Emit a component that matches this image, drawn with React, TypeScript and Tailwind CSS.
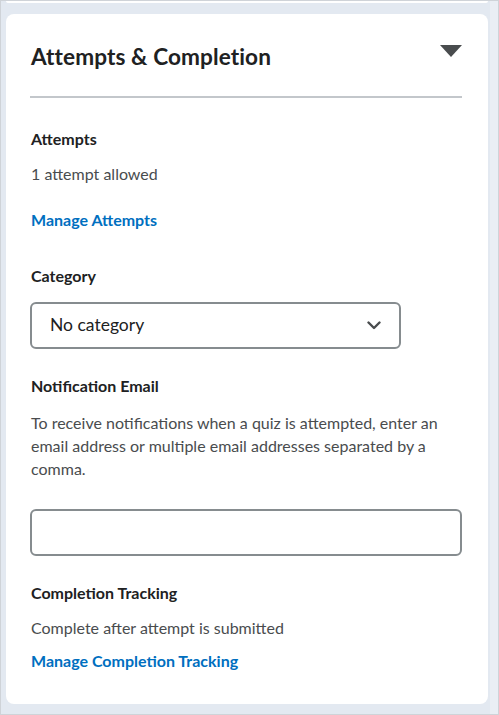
import React from "react";

export default function App() {
  return (
    <div
      className="w-[499px] h-[715px] border border-[#cfd3d8] bg-[#e3e9f1] flex overflow-hidden"
      style={{ fontFamily: "Lato, 'Noto Sans', sans-serif" }}
    >
      <div className="flex-1 flex flex-col pl-[5px]">
        <div className="h-[2px] w-[482px] bg-white rounded-b-[8px]" />
        <div className="mt-[11px] w-[482px] h-[690px] bg-white rounded-[8px] pl-[24px] pr-[26px] pt-[28px]">
          <div className="flex items-start justify-between h-[40px]">
            <h2 className="text-[22.6px] font-bold leading-[30px] text-[#202122] tracking-[0.1px] pl-[1px]">
              Attempts &amp; Completion
            </h2>
            <svg width="22" height="13" viewBox="0 0 22 13" className="mt-[3px]">
              <path d="M0 0 H22 L11 12 Z" fill="#494c4e" />
            </svg>
          </div>
          <div className="h-[2px] bg-[#c3c7cb] mt-[14px]" />

          <div className="pl-[1px]">
            <div className="mt-[31px] text-[16px] font-bold text-[#202122] leading-[20px]">Attempts</div>
            <div className="mt-[15px] text-[16px] text-[#494c4e] leading-[20px]">1 attempt allowed</div>
            <div className="mt-[26px] text-[16px] font-bold text-[#006fbf] leading-[20px]">Manage Attempts</div>

            <div className="mt-[36px] text-[16px] font-bold text-[#202122] leading-[20px]">Category</div>
          </div>
          <div className="mt-[16px] w-[371px] h-[47px] border-2 border-[#868c8f] rounded-[6px] flex items-center justify-between pl-[18px] pr-[18px]">
            <span className="text-[17.5px] text-[#202122]">No category</span>
            <svg width="14" height="9" viewBox="0 0 14 9">
              <path d="M1.5 1.5 L7 7 L12.5 1.5" stroke="#494c4e" strokeWidth="2.4" fill="none" strokeLinecap="round" strokeLinejoin="round" />
            </svg>
          </div>

          <div className="pl-[1px]">
            <div className="mt-[27px] text-[16px] font-bold text-[#202122] leading-[20px]">Notification Email</div>
            <p className="mt-[15px] text-[16px] text-[#494c4e] leading-[23px] pr-[8px]">
              To receive notifications when a quiz is attempted, enter an email address or multiple email addresses separated by a comma.
            </p>
          </div>
          <div className="mt-[29px] w-[432px] h-[47px] border-2 border-[#868c8f] rounded-[6px]" />

          <div className="pl-[1px]">
            <div className="mt-[27px] text-[16px] font-bold text-[#202122] leading-[20px]">Completion Tracking</div>
            <div className="mt-[15px] text-[16px] text-[#494c4e] leading-[20px]">Complete after attempt is submitted</div>
            <div className="mt-[13px] text-[16px] font-bold text-[#006fbf] leading-[20px]">Manage Completion Tracking</div>
          </div>
        </div>
      </div>
      <div className="w-[8px] bg-[#eaeef4]" />
    </div>
  );
}
